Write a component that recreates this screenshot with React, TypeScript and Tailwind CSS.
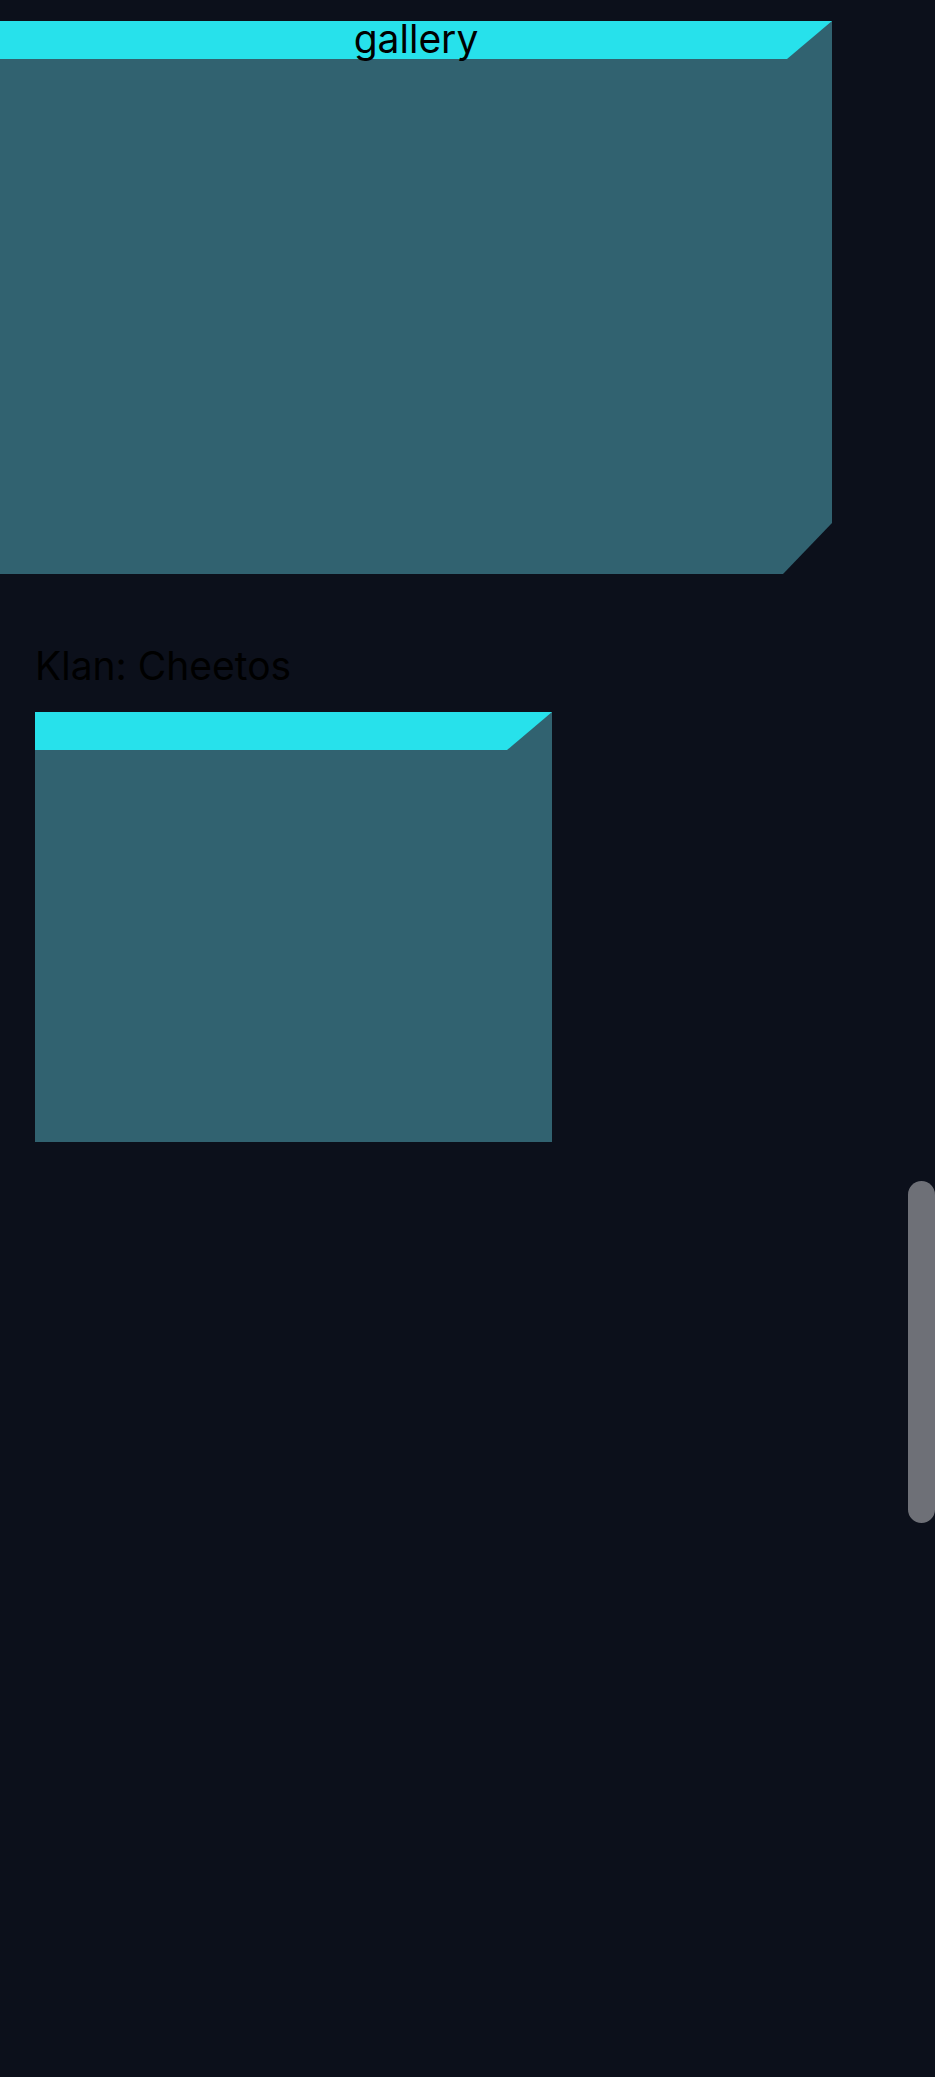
import type { ReactNode } from 'react'

function Panel({ title, className, body }: { title?: string; className: string; body: string }) {
  return (
    <div className={`flex flex-col bg-[#316270] ${className}`} style={{ clipPath: body }}>
      <div className="relative h-[38px] shrink-0">
        {/* slanted header strip */}
        <div
          className="absolute inset-0 bg-[#27e1eb]"
          style={{ clipPath: 'polygon(0 0, 100% 0, calc(100% - 45px) 100%, 0 100%)' }}
        />
        {title && (
          <div className="relative text-center text-[39px] leading-[36px] text-black">{title}</div>
        )}
      </div>
    </div>
  )
}

function Section({ label, children }: { label: string; children: ReactNode }) {
  return (
    <section className="flex flex-col gap-4 pl-[35px]">
      <h2 className="text-[39px] leading-[60px] font-normal text-black">{label}</h2>
      {children}
    </section>
  )
}

export default function App() {
  return (
    <div className="relative min-h-[2077px] bg-[#0c101b] pt-[21px] font-['Inter','Noto_Sans',sans-serif]">
      <div className="flex flex-col gap-[62px]">
        <Panel
          title="gallery"
          className="h-[553px] w-[832px]"
          body="polygon(0 0, 100% 0, 100% calc(100% - 51px), calc(100% - 49px) 100%, 0 100%)"
        />
        <Section label="Klan: Cheetos">
          <Panel className="h-[430px] w-[517px]" body="none" />
        </Section>
      </div>

      {/* scrollbar thumb overlay */}
      <div className="absolute left-[908px] top-[1181px] h-[342px] w-[27px] rounded-full bg-[#6e7077]" />
    </div>
  )
}
